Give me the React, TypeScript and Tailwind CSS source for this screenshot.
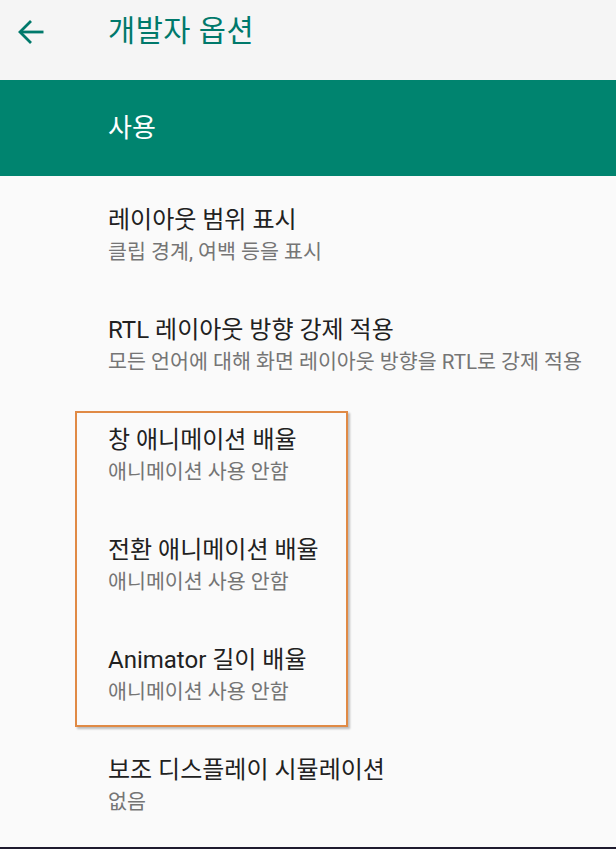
const FONT = "font-['Roboto','Noto_Sans_CJK_KR',sans-serif]";

const ITEMS = [
  { title: "레이아웃 범위 표시", sub: "클립 경계, 여백 등을 표시" },
  { title: "RTL 레이아웃 방향 강제 적용", sub: "모든 언어에 대해 화면 레이아웃 방향을 RTL로 강제 적용" },
  { title: "창 애니메이션 배율", sub: "애니메이션 사용 안함" },
  { title: "전환 애니메이션 배율", sub: "애니메이션 사용 안함" },
  { title: "Animator 길이 배율", sub: "애니메이션 사용 안함" },
  { title: "보조 디스플레이 시뮬레이션", sub: "없음" },
];

export default function App() {
  return (
    <div className={`relative w-[616px] h-[849px] overflow-hidden bg-[#fafafa] ${FONT}`}>
      {/* Toolbar */}
      <div className="flex items-center h-20 bg-[#f5f5f5] pb-4">
        <div className="w-[108px] pl-[18px] flex items-center">
          <svg width="26" height="26" viewBox="0 0 26 26" fill="none" stroke="#00796b" strokeWidth="2.8" strokeLinecap="butt">
            <path d="M2 13H25.5" />
            <path d="M13 2 2 13l11 11" />
          </svg>
        </div>
        <h1 className="text-[29.5px] text-[#00796b] leading-none tracking-[0.5px]">개발자 옵션</h1>
      </div>

      {/* Master switch bar */}
      <div className="h-24 bg-[#00846f] flex items-center pl-[108px]">
        <span className="text-[26px] text-white leading-none">사용</span>
      </div>

      {/* List */}
      <div className="flex flex-col">
        {ITEMS.map((it) => (
          <div key={it.title} className="h-[110px] pt-[28px] pl-[108px]">
            <div className="h-8 flex items-center text-[24px] text-[#212121]">{it.title}</div>
            <div className="h-8 flex items-center text-[20.6px] text-[#757575]">{it.sub}</div>
          </div>
        ))}
      </div>

      {/* Highlight annotation */}
      <div className="absolute left-[75px] top-[411px] w-[273px] h-[316px] border-2 border-[#e08a45] shadow-[2px_2px_2px_rgba(0,0,0,0.25)]" />

      <div className="absolute left-0 right-0 bottom-0 h-[2px] bg-[#1f1b2e]" />
    </div>
  );
}
